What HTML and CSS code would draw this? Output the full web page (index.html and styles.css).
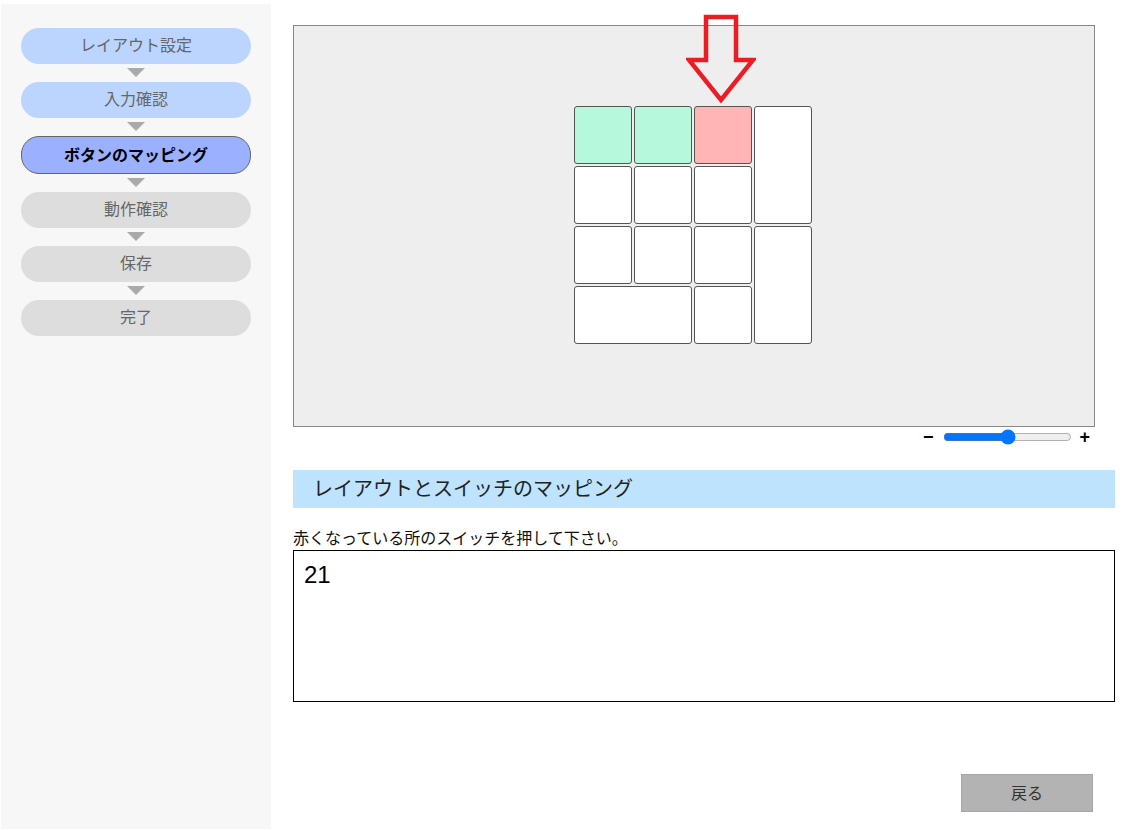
FILE: index.html
```html
<!DOCTYPE html>
<html lang="ja">
<head>
<meta charset="utf-8">
<title>ボタンのマッピング</title>
<link rel="stylesheet" href="styles.css">
</head>
<body>
<div class="page">
  <nav class="sidebar">
    <div class="step done">レイアウト設定</div>
    <div class="step-arrow"><span></span></div>
    <div class="step done">入力確認</div>
    <div class="step-arrow"><span></span></div>
    <div class="step active">ボタンのマッピング</div>
    <div class="step-arrow"><span></span></div>
    <div class="step todo">動作確認</div>
    <div class="step-arrow"><span></span></div>
    <div class="step todo">保存</div>
    <div class="step-arrow"><span></span></div>
    <div class="step todo">完了</div>
  </nav>
  <main class="main">
    <div class="canvas-wrap">
      <div class="canvas">
        <div class="keys">
          <div class="key mapped"></div>
          <div class="key mapped"></div>
          <div class="key target"></div>
          <div class="key tall"></div>
          <div class="key"></div>
          <div class="key"></div>
          <div class="key"></div>
          <div class="key"></div>
          <div class="key"></div>
          <div class="key"></div>
          <div class="key tall"></div>
          <div class="key wide"></div>
          <div class="key"></div>
        </div>
      </div>
      <svg class="pointer" width="70" height="92" viewBox="0 0 70 92">
        <polygon points="20,4 50,4 50,47 67,47 35,87 3,47 20,47" fill="none" stroke="#ed1c24" stroke-width="4.5" stroke-linejoin="miter"/>
      </svg>
    </div>
    <div class="zoom-row">
      <span class="zoom-sign">−</span>
      <input class="zoom-range" type="range" min="0" max="100" value="50">
      <span class="zoom-sign">+</span>
    </div>
    <h2 class="section-title">レイアウトとスイッチのマッピング</h2>
    <p class="instruction">赤くなっている所のスイッチを押して下さい。</p>
    <div class="output">21</div>
    <div class="actions">
      <button class="back-btn" type="button">戻る</button>
    </div>
  </main>
</div>
</body>
</html>
```

FILE: styles.css
```css
html, body {
  margin: 0;
  padding: 0;
  background: #ffffff;
}

body {
  font-family: "Noto Sans CJK JP", "Liberation Sans", sans-serif;
  color: #000;
}

.page {
  display: flex;
  align-items: flex-start;
  padding: 4px 0 0 1px;
}

.sidebar {
  width: 270px;
  height: 825px;
  background: #f7f7f7;
  box-sizing: border-box;
  padding: 24px 0 0 20px;
  display: flex;
  flex-direction: column;
}

.step {
  width: 230px;
  height: 36px;
  border-radius: 18px;
  box-sizing: border-box;
  font-size: 16px;
  line-height: 32px;
  text-align: center;
  color: #666;
}

.step.done {
  background: #bcd5fe;
}

.step.todo {
  background: #dddddd;
}

.step.active {
  height: 38px;
  line-height: 34px;
  background: #9bb0ff;
  border: 1px solid #666;
  color: #000;
  font-weight: bold;
}

.step-arrow {
  height: 18px;
  display: flex;
  justify-content: center;
  width: 230px;
}

.step-arrow span {
  margin-top: 4px;
  width: 0;
  height: 0;
  border-top: 9px solid #aaaaaa;
  border-left: 9px solid transparent;
  border-right: 9px solid transparent;
}

.main {
  margin-left: 22px;
  width: 822px;
  display: flex;
  flex-direction: column;
}

.canvas-wrap {
  position: relative;
  margin-top: 21px;
  width: 802px;
}

.canvas {
  width: 800px;
  height: 400px;
  border: 1px solid #888;
  background: #eeeeee;
}

.keys {
  display: grid;
  grid-template-columns: repeat(4, 58px);
  grid-template-rows: repeat(4, 58px);
  gap: 2px;
  margin: 80px 0 0 280px;
  width: 238px;
}

.key {
  box-sizing: border-box;
  border: 1px solid #555;
  border-radius: 3px;
  background: #fff;
}

.key.mapped {
  background: #b6f8dc;
}

.key.target {
  background: #ffb4b6;
}

.key.tall {
  grid-row: span 2;
}

.key.wide {
  grid-column: span 2;
}

.pointer {
  position: absolute;
  left: 393px;
  top: -12px;
}

.zoom-row {
  width: 802px;
  height: 20px;
  display: flex;
  justify-content: flex-end;
  align-items: center;
  padding-right: 5px;
  box-sizing: border-box;
}

.zoom-sign {
  font-family: "Liberation Sans", sans-serif;
  font-weight: bold;
  font-size: 18px;
  line-height: 20px;
}

.zoom-range {
  width: 129px;
  margin: 0 7px 0 10px;
  accent-color: #0075ff;
}

.section-title {
  margin: 23px 0 0 0;
  height: 38px;
  background: #bee3fd;
  font-size: 20px;
  font-weight: normal;
  line-height: 36px;
  padding-left: 20px;
  color: #222;
}

.instruction {
  margin: 19px 0 3px 0;
  font-size: 16px;
  line-height: 20px;
  color: #111;
}

.output {
  height: 152px;
  box-sizing: border-box;
  border: 1px solid #000;
  padding: 10px 10px;
  font-family: "Liberation Sans", "Noto Sans CJK JP", sans-serif;
  font-size: 24px;
  line-height: 28px;
}

.actions {
  display: flex;
  justify-content: flex-end;
  padding-right: 22px;
  margin-top: 72px;
}

.back-btn {
  width: 132px;
  height: 38px;
  background: #b3b3b3;
  border: 1px solid #a6a6a6;
  font-family: "Noto Sans CJK JP", sans-serif;
  font-size: 16px;
  line-height: 20px;
  color: #333;
  padding: 0 0 3px 0;
}
```
